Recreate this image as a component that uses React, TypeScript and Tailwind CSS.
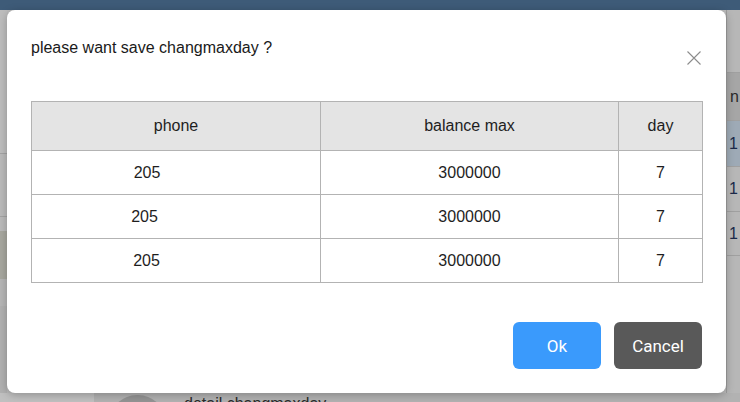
const rows = [
  { phone: "205", balance: "3000000", day: "7", shift: "pr-[58px]" },
  { phone: "205", balance: "3000000", day: "7", shift: "pr-[63px]" },
  { phone: "205", balance: "3000000", day: "7", shift: "pr-[59px]" },
];

export default function App() {
  return (
    <div className="relative h-[402px] w-[740px] overflow-hidden bg-[#bbbbbb] font-['Liberation_Sans',Arial,sans-serif]">
      {/* page behind the mask */}
      <div className="h-[10px] bg-[#3e5b78]" />
      <div className="flex h-[383px]">
        <div className="flex w-[7px] flex-col">
          <div className="h-[144px] border-b border-[#a3a3a3] bg-[#bdbdbd]" />
          <div className="h-[63px] border-b border-[#a3a3a3] bg-[#bababa]" />
          <div className="h-[14px] bg-[#bababa]" />
          <div className="h-[48px] bg-[#a7a79f]" />
          <div className="h-[27px] bg-[#b6b6b6]" />
          <div className="flex-1 bg-[#b1b1b1]" />
        </div>
        <div className="flex-1" />
        <div className="flex w-[14px] flex-col border-l border-[#9d9d9d] bg-[#b7b7b7] text-[16px]">
          <div className="h-[62px]" />
          <div className="flex h-[49px] items-center border-y border-[#a0a0a0] bg-[#a6a6a6] pl-[3px] text-[#2a2a2a]">n</div>
          <div className="flex h-[45px] items-center bg-[#9eaab6] pl-[2px] text-[#1c2a4a]">1</div>
          <div className="flex h-[45px] items-center border-t border-[#a0a0a0] pl-[2px] text-[#1c2a4a]">1</div>
          <div className="flex h-[45px] items-center border-y border-[#a0a0a0] pl-[2px] text-[#1c2a4a]">1</div>
        </div>
      </div>
      <div className="flex h-[9px] items-start">
        <div className="h-full w-[94px] bg-[#c0c0c0]" />
        <div className="flex h-full flex-1 items-start gap-[18px] bg-[#b2b2b2] pl-[15px]">
          <div className="mt-[2px] h-[56px] w-[57px] shrink-0 rounded-full bg-[#949494]" />
          <span className="mt-[1px] text-[16px] leading-[20px] text-[#2a2a2a]">detail changmaxday</span>
        </div>
      </div>

      {/* confirm dialog */}
      <div className="absolute inset-0 pl-[7px] pt-[10px]">
        <div className="w-[719px] rounded-[8px] bg-white px-6 pb-6 pt-[26px] shadow-[0_2px_8px_rgba(0,0,0,0.25)]">
          <div className="flex h-[29px] items-start justify-between">
            <h2 className="text-[16px] leading-[24px] text-[#1a1a1a]">please want save changmaxday ?</h2>
            <button type="button" className="mr-[1px] mt-[15px] text-[#8c8c8c]">
              <svg width="14" height="14" viewBox="0 0 14 14" fill="none" stroke="currentColor" strokeWidth="1.1">
                <path d="M0.5 0.5L13.5 13.5M13.5 0.5L0.5 13.5" />
              </svg>
            </button>
          </div>

          <table className="mt-[36px] w-[671px] table-fixed border-collapse text-center text-[16px] text-[#1e1e1e]">
            <colgroup>
              <col className="w-[289px]" />
              <col className="w-[298px]" />
              <col className="w-[84px]" />
            </colgroup>
            <thead>
              <tr className="h-[49px] bg-[#e4e4e4]">
                <th className="border border-[#b3b3b3] font-normal">phone</th>
                <th className="border border-[#b3b3b3] font-normal">balance max</th>
                <th className="border border-[#b3b3b3] font-normal">day</th>
              </tr>
            </thead>
            <tbody>
              {rows.map((row, index) => (
                <tr className="h-[44px]" key={index}>
                  <td className={`border border-[#b3b3b3] ${row.shift}`}>{row.phone}</td>
                  <td className="border border-[#b3b3b3]">{row.balance}</td>
                  <td className="border border-[#b3b3b3]">{row.day}</td>
                </tr>
              ))}
            </tbody>
          </table>

          <div className="mt-[39px] flex justify-end gap-[13px] font-['Roboto',sans-serif] text-[17px] text-white">
            <button type="button" className="h-[47px] w-[88px] rounded-[6px] bg-[#3a9afc] pt-[2px]">
              Ok
            </button>
            <button type="button" className="h-[47px] w-[88px] rounded-[6px] bg-[#595959] pt-[2px]">
              Cancel
            </button>
          </div>
        </div>
      </div>
    </div>
  );
}
